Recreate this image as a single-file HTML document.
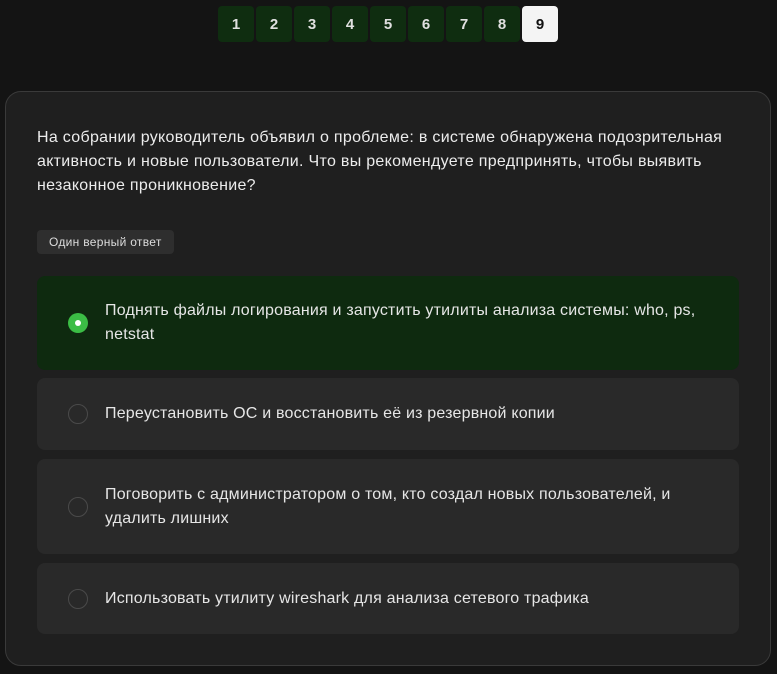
<!DOCTYPE html>
<html><head><meta charset="utf-8"><style>
*{box-sizing:border-box;margin:0;padding:0}
body{width:777px;height:674px;background:#141414;font-family:"Liberation Sans",Arial,sans-serif;position:relative;overflow:hidden;color:#e8e8e8}
.nav{position:absolute;top:6px;left:218px;display:flex;gap:2px}
.nav div{width:36px;height:36px;border-radius:4px;background:#0f2d10;color:#e0e0e0;font-weight:bold;font-size:15px;display:flex;align-items:center;justify-content:center}
.nav div.a{background:#f4f4f4;color:#111}
.card{position:absolute;left:5px;top:91px;width:766px;height:575px;background:#1f1f1f;border:1px solid #3a3a3a;border-radius:16px}
.q{position:absolute;left:31px;top:34px;width:710px;font-size:16px;line-height:24px;color:#ececec;letter-spacing:0.3px}
.tag{position:absolute;left:31px;top:138px;height:24px;padding:0 12px;background:#2e2e2e;border-radius:4px;font-size:12px;line-height:24px;color:#ddd;letter-spacing:0.3px}
.opt{position:absolute;left:31px;width:702px;background:#292929;border-radius:8px;display:flex;align-items:center;padding-left:68px;padding-right:30px;font-size:16px;line-height:24px;color:#e6e6e6;letter-spacing:0.2px}
.opt .r{position:absolute;left:31px;top:50%;margin-top:-10px;width:20px;height:20px;border-radius:50%;border:1.5px solid #4a4a4a}
.opt.s{background:#0e2a0f}
.opt.s .r{border:none;background:#3bbd45}
.opt.s .r:after{content:"";position:absolute;left:7px;top:7px;width:6px;height:6px;border-radius:50%;background:#fff}
</style></head><body>
<div class="nav"><div>1</div><div>2</div><div>3</div><div>4</div><div>5</div><div>6</div><div>7</div><div>8</div><div class="a">9</div></div>
<div class="card">
<div class="q">На собрании руководитель объявил о проблеме: в системе обнаружена подозрительная активность и новые пользователи. Что вы рекомендуете предпринять, чтобы выявить незаконное проникновение?</div>
<div class="tag">Один верный ответ</div>
<div class="opt s" style="top:184px;height:94px"><span class="r"></span>Поднять файлы логирования и запустить утилиты анализа системы: who, ps, netstat</div>
<div class="opt" style="top:286px;height:72px"><span class="r"></span>Переустановить ОС и восстановить её из резервной копии</div>
<div class="opt" style="top:367px;height:95px"><span class="r"></span>Поговорить с администратором о том, кто создал новых пользователей, и удалить лишних</div>
<div class="opt" style="top:471px;height:71px"><span class="r"></span>Использовать утилиту wireshark для анализа сетевого трафика</div>
</div>
</body></html>
